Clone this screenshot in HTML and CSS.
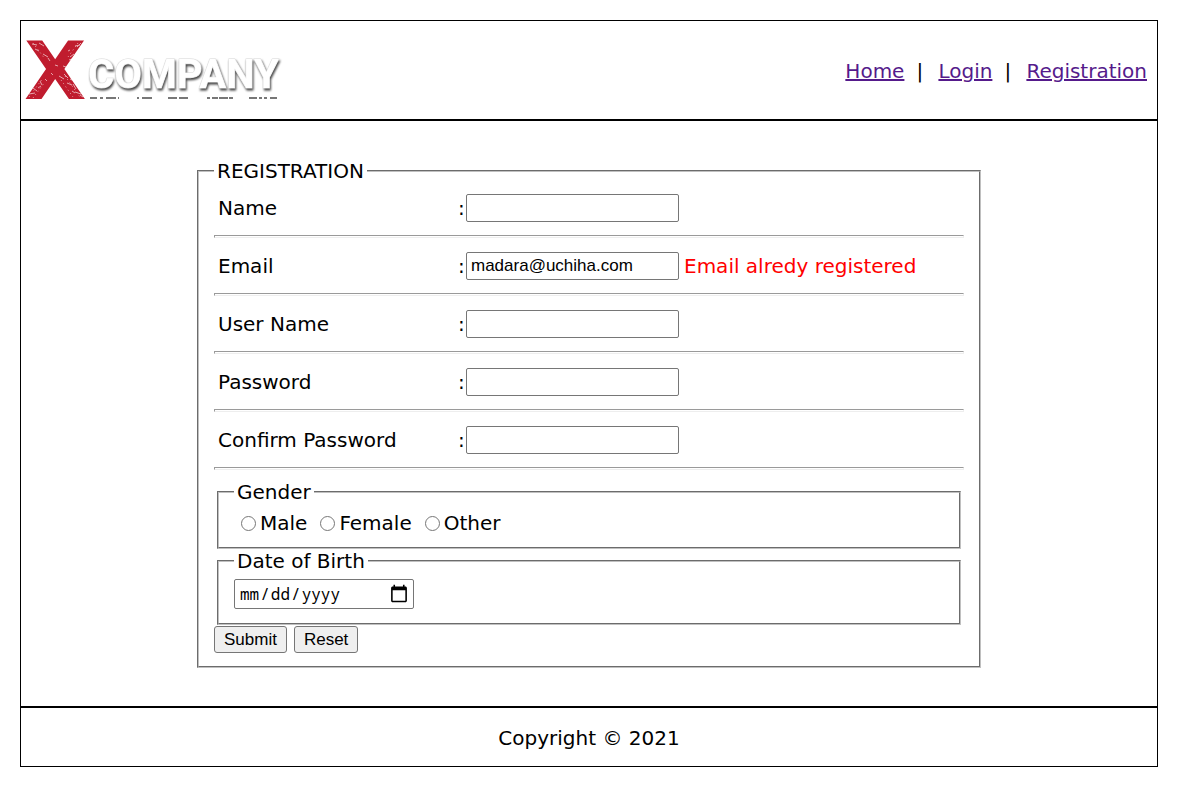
FILE: index.html
```html
<!DOCTYPE html>
<html lang="en">
<head>
<meta charset="utf-8">
<meta name="viewport" content="width=device-width, initial-scale=1">
<title>Registration</title>
<link rel="stylesheet" href="styles.css">
</head>
<body>
<div class="page">
  <header class="header">
    <svg class="logo" width="280" height="98" viewBox="0 -13 280 98" role="img" aria-label="X Company">
      <text class="logo-x" x="3" y="65">X</text>
      <g class="flecks">
        <path d="M11 10l5 1M18 9l5 3M14 15l4 2M22 20l5 3M27 24l2 3M54 12l5-1M60 9l-4 4M53 20l-4 3M48 26l3-1M42 32l3 1"/>
        <path d="M38 42l5 3M43 40l4 4M46 49l5 2M52 50l3 5M54 58l6 2M51 57l3 2M8 60l6-1M12 54l4 3M19 47l2 4M24 45l2 2M17 54l3-2M30 39l2 2M59 61l3 2M49 45l2 1M34 31l3 1M47 17l2-1"/>
        <path class="grit" d="M8 63l14-19M12 64l12-16M44 42l15 21M40 46l12 17M12 9l12 16M57 9l-10 14"/>
      </g>
      <text class="logo-word" x="67" y="54">COMPANY</text>
      <path class="logo-rule" d="M69 64h7m3 0h3m3 0h10m2 0h1M116 64h2m3 0h10M147 64h9m2 0h9M186 64h3m2 0h6m1 0h9m1 0h4M228 64h8m2 0h3m2 0h3m3 0h7"/>
    </svg>
    <nav class="nav">
      <a href="#home">Home</a><span class="bar">|</span><a href="#login">Login</a><span class="bar">|</span><a href="#registration">Registration</a>
    </nav>
  </header>

  <main class="main">
    <form class="form">
      <fieldset class="panel">
        <legend>REGISTRATION</legend>
        <div class="row"><label for="name">Name</label><span class="colon">:</span><input class="field" type="text" id="name"></div>
        <hr>
        <div class="row"><label for="email">Email</label><span class="colon">:</span><input class="field" type="text" id="email" value="madara@uchiha.com"><span class="error">Email alredy registered</span></div>
        <hr>
        <div class="row"><label for="username">User Name</label><span class="colon">:</span><input class="field" type="text" id="username"></div>
        <hr>
        <div class="row"><label for="password">Password</label><span class="colon">:</span><input class="field" type="password" id="password"></div>
        <hr>
        <div class="row"><label for="confirm">Confirm Password</label><span class="colon">:</span><input class="field" type="password" id="confirm"></div>
        <hr>
        <fieldset class="group gender">
          <legend>Gender</legend>
          <div class="options">
            <label class="option"><input type="radio" name="gender">Male</label>
            <label class="option"><input type="radio" name="gender">Female</label>
            <label class="option"><input type="radio" name="gender">Other</label>
          </div>
        </fieldset>
        <fieldset class="group birth">
          <legend>Date of Birth</legend>
          <input class="date" type="date" aria-label="Date of Birth">
        </fieldset>
        <div class="actions">
          <button class="button" type="submit">Submit</button>
          <button class="button" type="reset">Reset</button>
        </div>
      </fieldset>
    </form>
  </main>

  <footer class="footer">Copyright © 2021</footer>
</div>
</body>
</html>
```
FILE: styles.css
```css
* { box-sizing: border-box; }

body {
  margin: 20px;
  background: #fff;
  color: #000;
  font: 20px/24px Verdana, "DejaVu Sans", sans-serif;
}

.page { border: 1px solid #000; }

.header {
  display: flex;
  align-items: center;
  justify-content: space-between;
  min-height: 100px;
  padding-right: 10px;
  border-bottom: 2px solid #000;
}

.logo { display: block; }
.logo-x { font: bold 81px "DejaVu Sans", sans-serif; fill: #c01c2e; }
.logo-word {
  font: bold 40px Roboto, sans-serif;
  fill: #fff;
  stroke: #ddd;
  stroke-width: 1px;
  paint-order: stroke;
  filter: drop-shadow(1px 2px 1px #444);
}
.flecks { fill: none; stroke: #fff; stroke-width: 1; opacity: 0.6; }
.grit { stroke-dasharray: 1 3; }
.logo-rule { fill: none; stroke: #777; stroke-width: 2; }

.nav { display: flex; padding-top: 2px; }
.nav a { color: #551a8b; text-decoration-thickness: 2px; }
.bar { width: 34px; padding-left: 12px; }

.main { padding: 38px 20px; }
.form { width: 784px; max-width: 100%; margin: 0 auto; }

fieldset {
  min-width: 0;
  margin: 0;
  border: 2px groove #c0c0c0;
}
legend { padding: 0 3px; }

.panel { padding: 9px 15px 13px; }

.row {
  display: flex;
  align-items: center;
  height: 32px;
  padding-left: 4px;
}
.row label { flex: 0 0 240px; }
.colon { width: 8px; }
.field {
  width: 213px;
  height: 28px;
  padding: 1px 4px;
  border: 1px solid #767676;
  border-radius: 2px;
  font: 17px "Liberation Sans", Arial, sans-serif;
}
.error { margin-left: 5px; color: #f00; }

hr {
  height: 3px;
  margin: 11px 0 12px;
  border: 1px inset #eee;
}

.group { margin: 0 3px; padding: 0 15px; }
.gender { height: 69px; margin-top: -2px; }
.options { display: flex; gap: 12px; padding: 7px 0 0 6px; }
.option { display: flex; align-items: center; }
.option input { width: 15px; height: 15px; margin: 0 4px 0 1px; }
.birth { height: 76px; }
.date {
  display: block;
  width: 180px;
  height: 30px;
  margin-top: 6px;
  padding: 1px 4px;
  border: 1px solid #767676;
  border-radius: 2px;
  font: 16px "Noto Sans Mono", "DejaVu Sans Mono", monospace;
}
.date::-webkit-calendar-picker-indicator { width: 20px; height: 20px; padding: 0; }

.actions { display: flex; gap: 7px; margin-top: 1px; }
.button {
  height: 27px;
  padding: 1px 9px;
  border: 1px solid #767676;
  border-radius: 3px;
  background: #efefef;
  color: #000;
  font: 17px "Liberation Sans", Arial, sans-serif;
}

.footer {
  padding: 18px 0 16px;
  border-top: 2px solid #000;
  text-align: center;
}
```
